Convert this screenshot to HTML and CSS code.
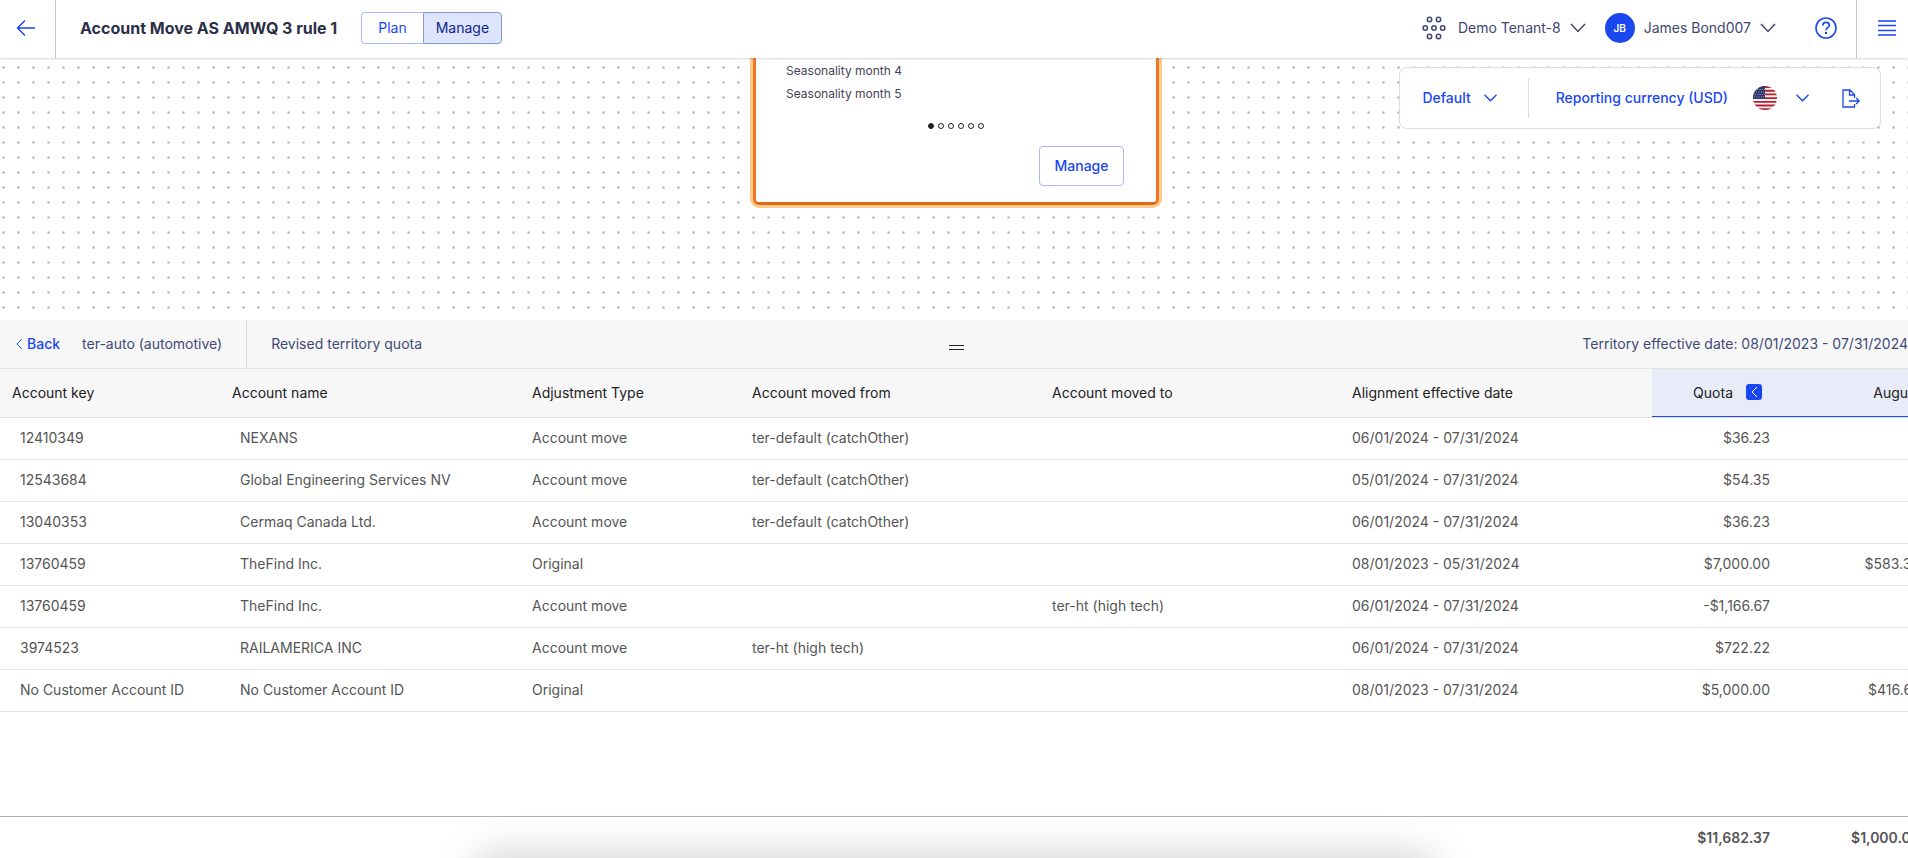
FILE: index.html
```html
<!DOCTYPE html>
<html lang="en">
<head>
<meta charset="utf-8">
<title>Account Move AS AMWQ 3 rule 1</title>
<link rel="stylesheet" href="styles.css">
</head>
<body>
<div class="app">
  <header class="topbar">
    <button class="back-btn" aria-label="Go back">
      <svg width="20" height="18" viewBox="0 0 20 18" fill="none" stroke="currentColor" stroke-width="1.5"><path d="M19 9H2M9 1.5L1.5 9L9 16.5"/></svg>
    </button>
    <h1 class="title">Account Move AS AMWQ 3 rule 1</h1>
    <div class="segmented">
      <button class="segment">Plan</button>
      <button class="segment segment-active">Manage</button>
    </div>
    <div class="topbar-right">
      <button class="menu-btn tenant">
        <svg width="24" height="24" viewBox="0 0 24 24" fill="none" stroke="currentColor" stroke-width="1.5"><circle cx="7.500" cy="3.500" r="2.200"/><circle cx="16.500" cy="3.500" r="2.200"/><circle cx="3.300" cy="12" r="2.200"/><circle cx="12" cy="12" r="2.200"/><circle cx="20.700" cy="12" r="2.200"/><circle cx="7.500" cy="20.500" r="2.200"/><circle cx="16.500" cy="20.500" r="2.200"/></svg>
        <span class="tenant-name">Demo Tenant-8</span>
        <svg width="16" height="10" viewBox="0 0 16 10" fill="none" stroke="currentColor" stroke-width="1.5"><path d="M1 1L8 8.500L15 1"/></svg>
      </button>
      <button class="menu-btn user">
        <span class="avatar">JB</span>
        <span>James Bond007</span>
        <svg width="16" height="10" viewBox="0 0 16 10" fill="none" stroke="currentColor" stroke-width="1.5"><path d="M1 1L8 8.500L15 1"/></svg>
      </button>
      <button class="icon-btn help" aria-label="Help">
        <svg width="22" height="22" viewBox="0 0 22 22" fill="none" stroke="currentColor" stroke-width="1.6"><circle cx="11" cy="11" r="10"/><path d="M7.800 8.500C7.800 6.700 9.200 5.400 11.100 5.400C13 5.400 14.300 6.600 14.300 8.200C14.300 10.500 11 10.600 11 13.200"/><circle cx="11" cy="16" r="1.200" fill="currentColor" stroke="none"/></svg>
      </button>
      <button class="icon-btn nav" aria-label="Menu">
        <svg width="18" height="16" viewBox="0 0 18 16" fill="none" stroke="currentColor" stroke-width="1.500"><path d="M0 1H18M0 5.500H18M0 10.500H18M0 15H18"/></svg>
      </button>
    </div>
  </header>

  <main class="canvas">
    <section class="card">
      <ul class="seasons">
        <li>Seasonality month 4</li>
        <li>Seasonality month 5</li>
      </ul>
      <div class="dots"><i class="dot dot-on"></i><i class="dot"></i><i class="dot"></i><i class="dot"></i><i class="dot"></i><i class="dot"></i></div>
      <button class="card-btn">Manage</button>
    </section>
    <div class="toolbar">
      <button class="tool-btn tool-view">Default
        <svg width="13" height="8" viewBox="0 0 13 8" fill="none" stroke="currentColor" stroke-width="1.400"><path d="M0.500 0.700L6.500 6.700L12.500 0.700"/></svg>
      </button>
      <button class="tool-btn tool-currency">Reporting currency (USD)
        <svg class="flag" width="24" height="24" viewBox="0 0 24 24"><defs><clipPath id="round"><circle cx="12" cy="12" r="12"/></clipPath></defs><g clip-path="url(#round)"><rect width="24" height="24" fill="#f3f2f2"/><path d="M0 1H24M0 4.700H24M0 8.400H24M0 12.100H24M0 15.800H24M0 19.500H24M0 23.200H24" stroke="#b8202f" stroke-width="1.850"/><rect width="12" height="13" fill="#2f3a6e"/><path d="M2 3.500H12M1 6H12M2 8.500H12M1 11H12" stroke="#a9b0cc" stroke-width="0.900" stroke-dasharray="0.900 1.400"/></g></svg>
        <svg width="13" height="8" viewBox="0 0 13 8" fill="none" stroke="currentColor" stroke-width="1.400"><path d="M0.500 0.700L6.500 6.700L12.500 0.700"/></svg>
      </button>
      <button class="icon-btn" aria-label="Export">
        <svg width="18" height="19" viewBox="0 0 18 19" fill="none" stroke="currentColor" stroke-width="1.300"><path d="M12.500 15V18H1V1H8L12.500 5.500V9M7.500 1V6H12.500M7 12H17M14.200 9L17.200 12L14.200 15"/></svg>
      </button>
    </div>
  </main>

  <section class="panel">
    <div class="panel-bar">
      <a class="back-link" href="#"><svg width="6" height="10" viewBox="0 0 6 10" fill="none" stroke="currentColor"><path d="M5.500 0.500L1 5L5.500 9.500"/></svg>Back</a>
      <span class="territory">ter-auto (automotive)</span>
      <span class="quota-name">Revised territory quota</span>
      <span class="effective">Territory effective date: 08/01/2023 - 07/31/2024</span>
      <button class="grip" aria-label="Resize panel"></button>
    </div>
    <div class="table-area">
      <table class="grid">
        <colgroup><col class="c-key"><col class="c-name"><col class="c-type"><col class="c-move"><col class="c-move"><col class="c-date"><col class="c-quota"><col class="c-month"></colgroup>
        <thead>
          <tr><th>Account key</th><th>Account name</th><th>Adjustment Type</th><th>Account moved from</th><th>Account moved to</th><th>Alignment effective date</th><th class="num hot"><span class="quota-head">Quota <button class="collapse" aria-label="Collapse months"><svg width="7" height="12" viewBox="0 0 7 12" fill="none" stroke="currentColor"><path d="M6 1L1 6L6 11"/></svg></button></span></th><th class="num hot">August</th></tr>
        </thead>
        <tbody>
          <tr><td>12410349</td><td>NEXANS</td><td>Account move</td><td>ter-default (catchOther)</td><td></td><td>06/01/2024 - 07/31/2024</td><td class="num">$36.23</td><td class="num"></td></tr>
          <tr><td>12543684</td><td>Global Engineering Services NV</td><td>Account move</td><td>ter-default (catchOther)</td><td></td><td>05/01/2024 - 07/31/2024</td><td class="num">$54.35</td><td class="num"></td></tr>
          <tr><td>13040353</td><td>Cermaq Canada Ltd.</td><td>Account move</td><td>ter-default (catchOther)</td><td></td><td>06/01/2024 - 07/31/2024</td><td class="num">$36.23</td><td class="num"></td></tr>
          <tr><td>13760459</td><td>TheFind Inc.</td><td>Original</td><td></td><td></td><td>08/01/2023 - 05/31/2024</td><td class="num">$7,000.00</td><td class="num">$583.33</td></tr>
          <tr><td>13760459</td><td>TheFind Inc.</td><td>Account move</td><td></td><td>ter-ht (high tech)</td><td>06/01/2024 - 07/31/2024</td><td class="num">-$1,166.67</td><td class="num"></td></tr>
          <tr><td>3974523</td><td>RAILAMERICA INC</td><td>Account move</td><td>ter-ht (high tech)</td><td></td><td>06/01/2024 - 07/31/2024</td><td class="num">$722.22</td><td class="num"></td></tr>
          <tr><td>No Customer Account ID</td><td>No Customer Account ID</td><td>Original</td><td></td><td></td><td>08/01/2023 - 07/31/2024</td><td class="num">$5,000.00</td><td class="num">$416.67</td></tr>
        </tbody>
      </table>
    </div>
    <table class="grid totals">
      <colgroup><col class="c-key"><col class="c-name"><col class="c-type"><col class="c-move"><col class="c-move"><col class="c-date"><col class="c-quota"><col class="c-month"></colgroup>
      <tbody><tr><td></td><td></td><td></td><td></td><td></td><td></td><td class="num">$11,682.37</td><td class="num">$1,000.00</td></tr></tbody>
    </table>
    <div class="bottom-shadow"></div>
  </section>
</div>
</body>
</html>
```
FILE: styles.css
```css
* { box-sizing: border-box; }
body { margin: 0; font: 14px/20px Inter, "Liberation Sans", sans-serif; color: #222; background: #fff; }
button { font: inherit; color: inherit; background: none; border: 0; padding: 0; }
svg { display: block; flex: none; }
.app { height: 100vh; display: flex; flex-direction: column; overflow: hidden; }

.topbar { flex: none; height: 58px; display: flex; align-items: center; background: #fff; box-shadow: 0 1px 2px rgba(0, 0, 0, 0.16); position: relative; z-index: 2; }
.back-btn, .title, .segmented, .menu-btn, .help, .nav { padding-bottom: 2px; }
.back-btn { width: 56px; height: 100%; display: flex; align-items: center; justify-content: center; padding-right: 4px; border-right: 1px solid #c8c8c8; color: #1a47f0; }
.title { margin: 0 24px; font-size: 16px; font-weight: 700; color: #2b2f48; }
.segmented { display: flex; }
.segment { height: 32px; padding: 0 16px; border: 1px solid #a8b9f8; border-right: 0; border-radius: 4px 0 0 4px; color: #1a47f0; }
.segment-active { padding: 0 12px; border: 1px solid #8496d6; border-radius: 0 4px 4px 0; background: #dde5fe; color: #0e2486; }
.topbar-right { margin-left: auto; height: 100%; display: flex; align-items: center; }
.menu-btn { display: flex; align-items: center; gap: 9px; color: #3f4670; }
.tenant { margin-right: 19px; }
.tenant-name { margin-left: 3px; }
.avatar { width: 30px; height: 30px; border-radius: 50%; background: #1a47ee; color: #fff; font-size: 10px; font-weight: 600; line-height: 30px; text-align: center; }
.icon-btn { display: flex; align-items: center; color: #1a47f0; }
.help { margin: 0 19px 0 39px; }
.nav { height: 100%; padding-left: 21px; padding-right: 12px; border-left: 1px solid #c8c8c8; }

.canvas { flex: none; height: 262px; position: relative; background: radial-gradient(circle at center, #a4a4a8 0, transparent 2px) -4px 2px / 15px 15px; }
.card { position: absolute; top: 0; left: calc(50% - 201px); width: 406px; height: 147px; border: 3px solid #ee7724; border-bottom-color: #dc6a1c; border-top: 0; border-radius: 0 0 6px 6px; box-shadow: 0 0 0 3px #fdcb8a; background: #fff; padding: 0 32px 0 30px; display: flex; flex-direction: column; }
.seasons { list-style: none; margin: 1px 0 18px; padding: 0; font-size: 12px; line-height: 23px; color: #444454; }
.dots { display: flex; justify-content: center; gap: 4px; padding-left: 2px; }
.dot { width: 6px; height: 6px; border: 1px solid #222; border-radius: 50%; }
.dot-on { background: #222; }
.card-btn { align-self: flex-end; margin-top: 17px; width: 85px; height: 40px; border: 1px solid #a8b9f8; border-radius: 4px; color: #1a47f0; font-weight: 500; }
.toolbar { position: absolute; top: 9px; right: 27px; height: 62px; display: flex; align-items: center; background: #fff; border: 1px solid #d8dbec; border-radius: 8px; padding: 0 20px 0 22px; }
.tool-btn { display: flex; align-items: center; color: #1a47f0; font-weight: 500; height: 40px; }
.tool-view { gap: 13px; padding-right: 31px; border-right: 1px solid #d8dbec; }
.tool-currency { padding: 0 33px 0 27px; gap: 19px; }
.flag { margin-left: 6px; }

.panel { flex: 1; min-height: 0; display: flex; flex-direction: column; position: relative; overflow: hidden; }
.panel-bar { flex: none; height: 49px; display: flex; align-items: center; background: #f7f7f7; border-bottom: 1px solid #e2e2e2; position: relative; color: #3f4a78; }
.back-link { display: flex; align-items: center; gap: 5px; margin: 0 22px 0 16px; color: #1a47f0; font-weight: 500; text-decoration: none; }
.territory { height: 100%; line-height: 48px; padding-right: 24px; border-right: 1px solid #d3d8ee; }
.quota-name { margin-left: 24px; }
.effective { margin-left: auto; }
.grip { position: absolute; left: 50%; top: 25px; width: 15px; height: 5px; margin-left: -5px; border: solid #222; border-width: 1px 0; }
.table-area { flex: 1; min-height: 0; overflow: hidden; }
.grid { width: calc(100% + 24px); min-width: 1820px; table-layout: fixed; border-collapse: separate; border-spacing: 0; }
.c-key, .c-type { width: 220px; }
.c-name, .c-move { width: 300px; }
.c-quota { width: 130px; }
.c-month { width: 150px; }
.grid th { height: 49px; padding: 0 12px; text-align: left; font-weight: 400; background: #f7f7f7; border-bottom: 1px solid #e2e2e2; white-space: nowrap; }
.grid td { height: 42px; padding: 0 12px 2px; color: #555; border-bottom: 1px solid #e2e2e2; white-space: nowrap; }
.grid td:nth-child(-n+2) { padding-left: 20px; }
.grid .num { text-align: right; }
.grid .hot { background: #e8ecf8; box-shadow: inset 0 -1px #1a47f0; }
.quota-head { display: inline-flex; align-items: flex-start; gap: 13px; padding-right: 8px; }
.collapse { width: 16px; height: 16px; margin-top: 1px; border-radius: 3px; background: #1a47f0; color: #fff; display: flex; align-items: center; justify-content: center; }
.totals { flex: none; border-top: 1px solid #a9b2b9; }
.totals td { height: 41px; padding-bottom: 0; border: 0; font-weight: 600; }
.bottom-shadow { position: absolute; left: 25%; right: 25%; top: 100%; height: 40px; box-shadow: 0 0 44px rgba(0, 0, 0, 0.22); }
```
